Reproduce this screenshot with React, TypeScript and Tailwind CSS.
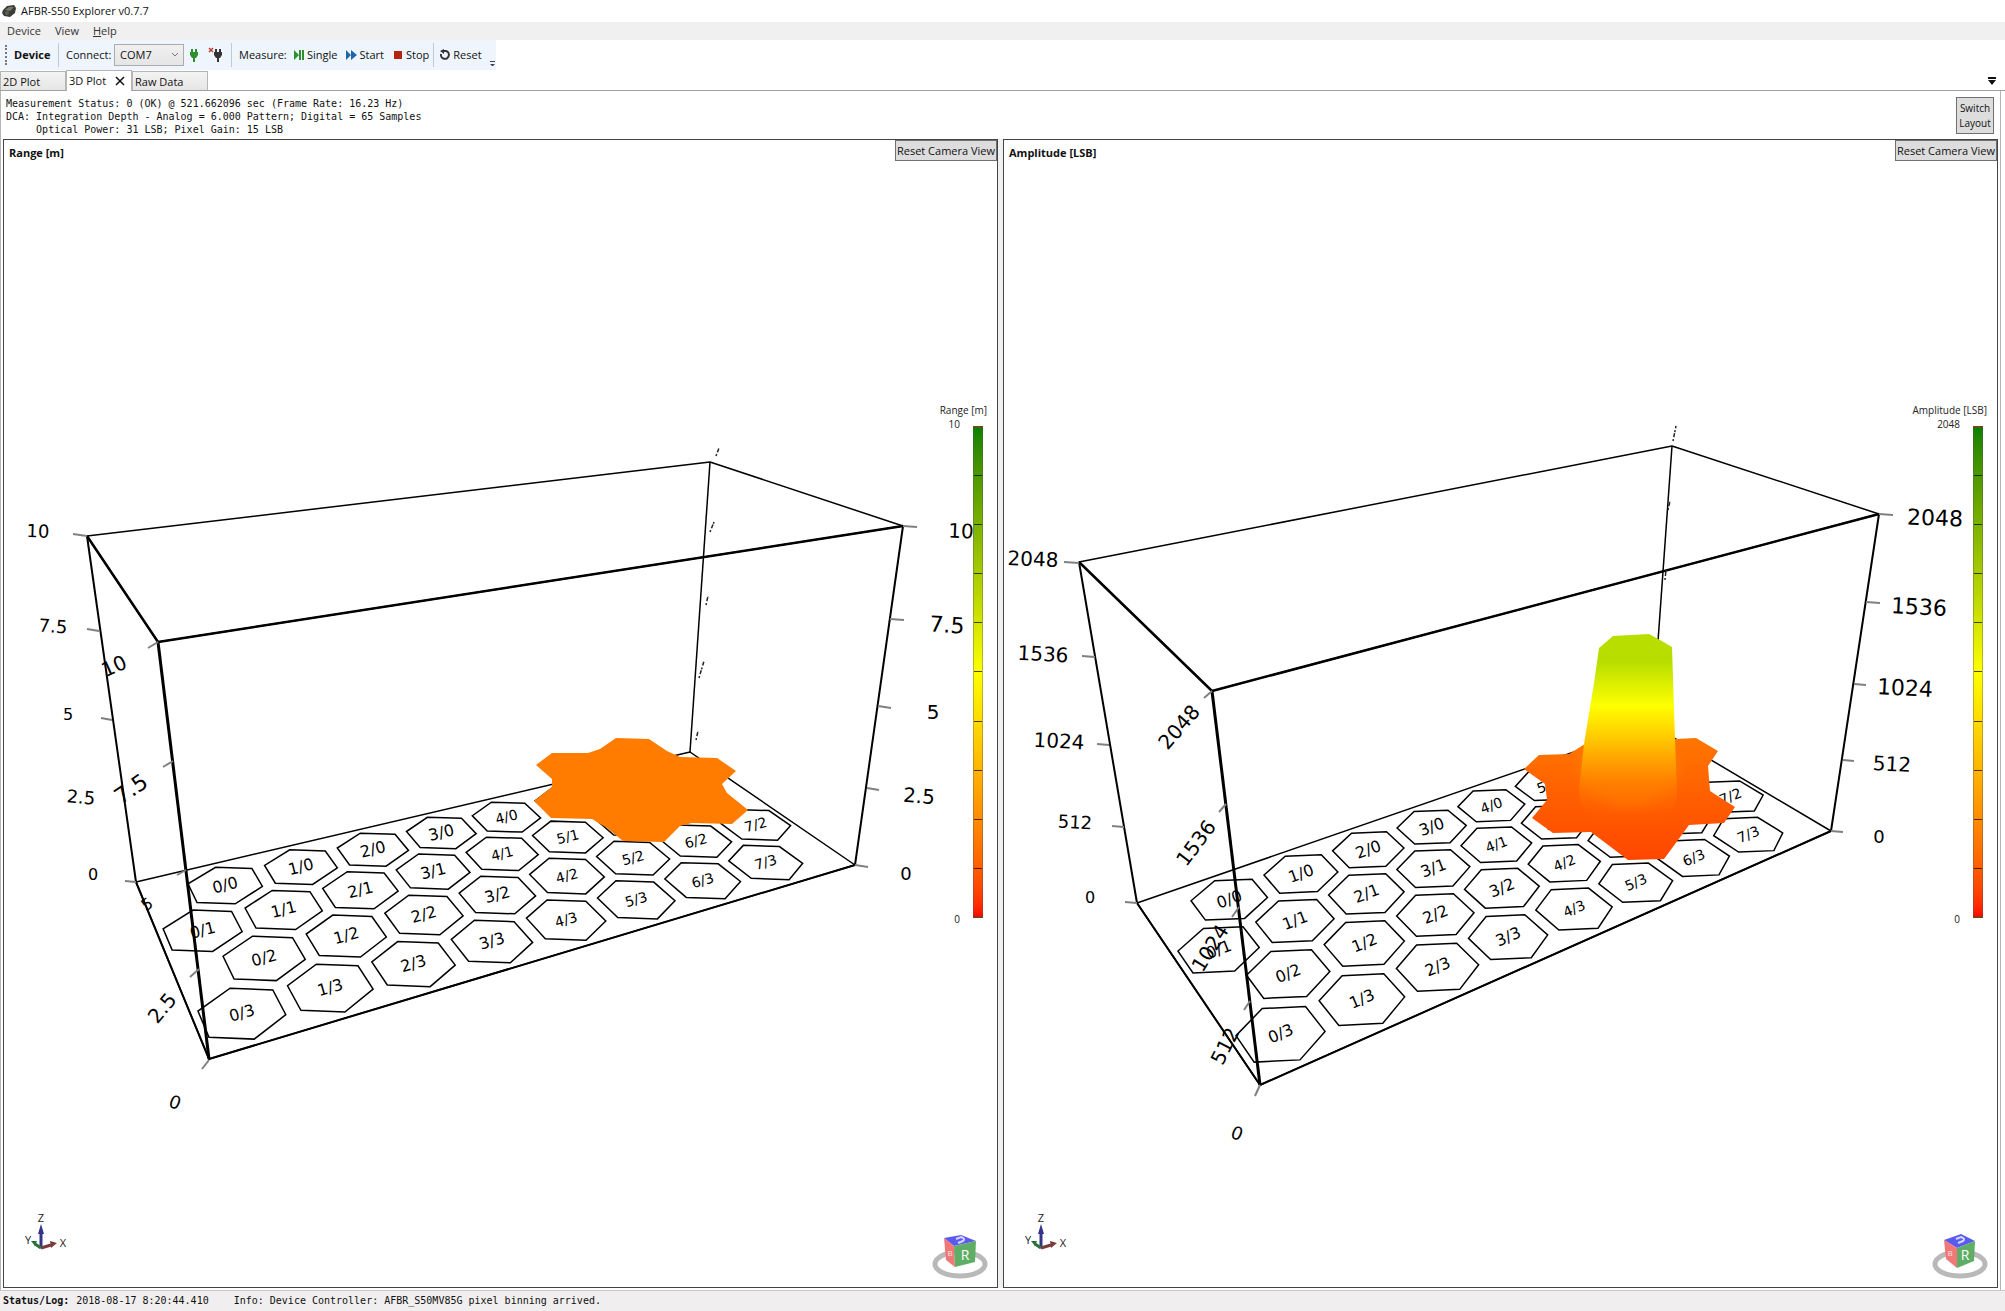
import { clsx } from "clsx";
import type { ReactNode } from "react";

type Point = [number, number];
type Segment = [Point, Point];

interface Label {
  text: string;
  at: Point;
  size: 14 | 16 | 18 | 20 | 22;
  angle?: number;
}

interface Scene {
  id: string;
  viewBox: string;
  // corner order: back left, back right, front right, front left
  floor: Point[];
  top: Point[];
  ticks: Segment[];
  specks: Segment[];
  labels: Label[];
}

const rangeScene: Scene = {
  id: "range",
  viewBox: "4 140 993 1147",
  floor: [[136, 882], [690, 752], [855, 865], [209, 1059]],
  top: [[87, 536], [710, 462], [903, 526], [158, 642]],
  ticks: [
    [[73, 534], [87, 536]],
    [[87, 629], [99, 631]],
    [[101, 718], [112, 720]],
    [[125, 881], [136, 882]],
    [[148, 648], [158, 642]],
    [[163, 767], [173, 761]],
    [[177, 875], [186, 870]],
    [[190, 977], [199, 969]],
    [[202, 1069], [209, 1060]],
    [[903, 526], [917, 527]],
    [[890, 619], [904, 620]],
    [[878, 706], [891, 708]],
    [[867, 788], [879, 790]],
    [[855, 865], [868, 867]],
  ],
  specks: [
    [[716, 456], [719, 448]],
    [[710, 532], [714, 522]],
    [[706, 605], [708, 596]],
    [[699, 678], [704, 661]],
    [[696, 740], [698, 731]],
  ],
  labels: [
    { text: "10", at: [38, 531], size: 18, angle: 2 },
    { text: "7.5", at: [53, 626], size: 18, angle: 4 },
    { text: "5", at: [68, 714], size: 16 },
    { text: "2.5", at: [81, 797], size: 18, angle: 5 },
    { text: "0", at: [93, 874], size: 16 },
    { text: "10", at: [114, 666], size: 20, angle: -24 },
    { text: "7.5", at: [131, 789], size: 22, angle: -34 },
    { text: "5", at: [147, 904], size: 16, angle: -35 },
    { text: "2.5", at: [162, 1008], size: 20, angle: -50 },
    { text: "0", at: [175, 1102], size: 18, angle: 20 },
    { text: "10", at: [961, 531], size: 20, angle: 2 },
    { text: "7.5", at: [947, 625], size: 22, angle: 4 },
    { text: "5", at: [933, 712], size: 20 },
    { text: "2.5", at: [919, 796], size: 20, angle: 4 },
    { text: "0", at: [906, 873], size: 18 },
  ],
};

const amplitudeScene: Scene = {
  id: "amplitude",
  viewBox: "1004 140 993 1147",
  floor: [[1137, 903], [1652, 725], [1831, 831], [1260, 1085]],
  top: [[1079, 562], [1672, 446], [1879, 514], [1212, 691]],
  ticks: [
    [[1064, 562], [1079, 563]],
    [[1082, 656], [1095, 657]],
    [[1097, 744], [1109, 745]],
    [[1112, 826], [1124, 827]],
    [[1125, 902], [1137, 903]],
    [[1204, 698], [1212, 691]],
    [[1219, 812], [1226, 804]],
    [[1232, 917], [1239, 907]],
    [[1244, 1010], [1250, 1001]],
    [[1255, 1096], [1260, 1085]],
    [[1879, 514], [1893, 515]],
    [[1866, 602], [1880, 603]],
    [[1854, 684], [1866, 685]],
    [[1843, 760], [1854, 761]],
    [[1831, 831], [1843, 832]],
  ],
  specks: [
    [[1673, 441], [1676, 426]],
    [[1668, 510], [1670, 501]],
    [[1665, 580], [1666, 570]],
  ],
  labels: [
    { text: "2048", at: [1033, 559], size: 20, angle: 2 },
    { text: "1536", at: [1043, 654], size: 20, angle: 3 },
    { text: "1024", at: [1059, 741], size: 20, angle: 3 },
    { text: "512", at: [1075, 822], size: 18, angle: 3 },
    { text: "0", at: [1090, 897], size: 16 },
    { text: "2048", at: [1179, 727], size: 20, angle: -49 },
    { text: "1536", at: [1196, 843], size: 20, angle: -53 },
    { text: "1024", at: [1210, 948], size: 20, angle: -58 },
    { text: "512", at: [1225, 1046], size: 20, angle: -63 },
    { text: "0", at: [1237, 1133], size: 18, angle: 20 },
    { text: "2048", at: [1935, 518], size: 22, angle: 2 },
    { text: "1536", at: [1919, 607], size: 22, angle: 3 },
    { text: "1024", at: [1905, 688], size: 22, angle: 3 },
    { text: "512", at: [1892, 764], size: 20, angle: 3 },
    { text: "0", at: [1879, 836], size: 18 },
  ],
};

const toPoints = (pts: Point[]) => pts.map((p) => p.join(",")).join(" ");

// Perspective map of the unit square onto the four floor corners.
function projector([p0, p1, p2, p3]: Point[]) {
  const sx = p0[0] - p1[0] + p2[0] - p3[0];
  const sy = p0[1] - p1[1] + p2[1] - p3[1];
  const dx1 = p1[0] - p2[0];
  const dx2 = p3[0] - p2[0];
  const dy1 = p1[1] - p2[1];
  const dy2 = p3[1] - p2[1];
  const det = dx1 * dy2 - dx2 * dy1;
  const g = (sx * dy2 - dx2 * sy) / det;
  const h = (dx1 * sy - sx * dy1) / det;
  return (u: number, v: number): Point => {
    const w = 1 + g * u + h * v;
    return [
      ((p1[0] - p0[0] + g * p1[0]) * u + (p3[0] - p0[0] + h * p3[0]) * v + p0[0]) / w,
      ((p1[1] - p0[1] + g * p1[1]) * u + (p3[1] - p0[1] + h * p3[1]) * v + p0[1]) / w,
    ];
  };
}

const COLS = 8;
const ROWS = 4;
const ROW_PITCH = Math.sqrt(3) / 2;
const CELL_RADIUS = 1 / Math.sqrt(3);
const HEX_RADIUS = 0.48;

function pixelGrid(floor: Point[]) {
  const project = projector(floor);
  const depth = (ROWS - 1) * ROW_PITCH + 2 * CELL_RADIUS;
  const map = (x: number, y: number) =>
    project((x + 0.5) / (COLS + 0.5), (y + CELL_RADIUS) / depth);

  return Array.from({ length: COLS * ROWS }, (_, i) => {
    const col = i % COLS;
    const row = Math.floor(i / COLS);
    const x = col + (row % 2 === 0 ? 0.5 : 0);
    const y = row * ROW_PITCH;
    const corners = Array.from({ length: 6 }, (_, k) => {
      const a = Math.PI / 6 + (k * Math.PI) / 3;
      return map(x + HEX_RADIUS * Math.cos(a), y + HEX_RADIUS * Math.sin(a));
    });
    const left = map(x - 0.3, y);
    const right = map(x + 0.3, y);
    const angle =
      (Math.atan2(right[1] - left[1], right[0] - left[0]) * 180) / Math.PI;
    return { name: `${col}/${row}`, col, center: map(x, y), corners, angle };
  });
}

function SceneText({ text, at, size, angle = 0 }: Label) {
  return (
    <text
      x={at[0]}
      y={at[1]}
      fontSize={size}
      textAnchor="middle"
      dominantBaseline="central"
      transform={`rotate(${Math.round(angle)} ${at[0]} ${at[1]})`}
    >
      {text}
    </text>
  );
}

function RangeSurface() {
  return (
    <polygon
      fill="#ff7c00"
      points="536,765 552,753 588,753 600,749 616,738 649,739 667,751 680,757 717,758 736,771 722,784 727,793 748,810 732,824 692,823 680,826 664,842 623,841 607,828 592,819 551,818 534,801 552,787 552,779"
    />
  );
}

function AmplitudeSurface() {
  return (
    <>
      <defs>
        <linearGradient id="base" x1="0" y1="738" x2="0" y2="860" gradientUnits="userSpaceOnUse">
          <stop offset="0" stopColor="#ff7600" />
          <stop offset="0.5" stopColor="#ff5e00" />
          <stop offset="1" stopColor="#ff4600" />
        </linearGradient>
        <linearGradient id="peak" x1="0" y1="634" x2="0" y2="834" gradientUnits="userSpaceOnUse">
          <stop offset="0" stopColor="#b8de00" />
          <stop offset="0.14" stopColor="#b8de00" />
          <stop offset="0.36" stopColor="#ffff00" />
          <stop offset="0.5" stopColor="#ffd000" />
          <stop offset="0.65" stopColor="#ff9c00" />
          <stop offset="0.76" stopColor="#ff7c00" stopOpacity="0.8" />
          <stop offset="0.95" stopColor="#ff5800" stopOpacity="0" />
        </linearGradient>
        <clipPath id="baseClip">
          <use href="#baseShape" />
        </clipPath>
        <filter id="soften">
          <feGaussianBlur stdDeviation="7" />
        </filter>
      </defs>
      <polygon
        id="baseShape"
        fill="url(#base)"
        points="1524,769 1539,755 1569,754 1585,744 1675,739 1696,738 1718,751 1708,766 1710,791 1735,807 1724,823 1689,825 1681,836 1664,859 1628,860 1591,832 1553,833 1532,818 1547,800 1545,784"
      />
      <g clipPath="url(#baseClip)">
        <ellipse cx="1629" cy="765" rx="48" ry="40" fill="#ff7c00" filter="url(#soften)" />
      </g>
      <path
        fill="url(#peak)"
        d="M1599 648 L1613 636 L1649 634 L1660 640 L1672 647 L1675 739 L1677 796 Q1672 834 1630 834 Q1582 834 1579 790 L1584 744 L1594 683 Z"
      />
    </>
  );
}

function Plot({ scene, children }: { scene: Scene; children: ReactNode }) {
  const { floor, top } = scene;
  return (
    <svg
      viewBox={scene.viewBox}
      className="absolute inset-0 h-full w-full font-['DejaVu_Sans',Verdana,sans-serif]"
      role="img"
      aria-label={`3D ${scene.id} plot`}
    >
      <g stroke="#000" strokeWidth="2" fill="none" strokeLinejoin="round">
        {[floor, top].map((ring, i) => (
          <polygon key={i} points={toPoints(ring)} strokeWidth="1.5" />
        ))}
        {floor.map((p, i) => (
          <line
            key={i}
            x1={p[0]}
            y1={p[1]}
            x2={top[i][0]}
            y2={top[i][1]}
            strokeWidth={i === 1 ? 1.5 : i === 3 ? 3 : 2}
          />
        ))}
        <polyline points={toPoints([top[0], top[3], top[2]])} strokeWidth="2.5" />
        <polyline points={toPoints([floor[0], floor[3], floor[2]])} />
      </g>
      <g stroke="#808080" strokeWidth="2">
        {scene.ticks.map(([a, b], i) => (
          <line key={i} x1={a[0]} y1={a[1]} x2={b[0]} y2={b[1]} />
        ))}
      </g>
      <g stroke="#222" strokeWidth="1.5" strokeDasharray="2 2 4 1">
        {scene.specks.map(([a, b], i) => (
          <line key={i} x1={a[0]} y1={a[1]} x2={b[0]} y2={b[1]} />
        ))}
      </g>
      {pixelGrid(floor).map((px) => (
        <g key={px.name}>
          <polygon
            points={toPoints(px.corners)}
            fill="none"
            stroke="#000"
            strokeWidth="1.5"
          />
          <SceneText
            text={px.name}
            at={px.center}
            size={px.col < 4 ? 16 : 14}
            angle={px.angle}
          />
        </g>
      ))}
      {children}
      {scene.labels.map((label, i) => (
        <SceneText key={i} {...label} />
      ))}
    </svg>
  );
}

function Legend({ title, max }: { title: string; max: string }) {
  return (
    <div className="absolute top-[263px] right-[10px] flex flex-col items-end text-[10px] leading-[14px] text-[#222]">
      <div>{title}</div>
      <div className="mr-[4px] flex h-[501px] gap-[13px]">
        <div className="flex flex-col items-end justify-between">
          <span>{max}</span>
          <span className="-mb-2">0</span>
        </div>
        <div className="mt-[9px] flex w-[10px] flex-col border border-[#555]/40 bg-linear-to-b from-[#008000] via-[#ffff00] to-[#ff0000]">
          {Array.from({ length: 10 }, (_, i) => (
            <div key={i} className={clsx("flex-1", i < 9 && "border-b border-black/70")} />
          ))}
        </div>
      </div>
    </div>
  );
}

function AxisTriad() {
  return (
    <svg
      viewBox="0 -8 48 50"
      className="absolute bottom-[32px] left-[20px] h-[50px] w-[48px] font-['Open_Sans',sans-serif]"
      aria-hidden="true"
    >
      <path d="M17 35 L17 20" stroke="#33338c" strokeWidth="3" />
      <path d="M17 11 L20 21 L14 21 Z" fill="#33338c" />
      <path d="M17 35 L27 32" stroke="#7a3a3a" strokeWidth="3" />
      <path d="M33 30 L26 28 L27 35 Z" fill="#7a3a3a" />
      <path d="M17 35 L11 31" stroke="#2c6e38" strokeWidth="3" />
      <path d="M7 28 L13 28 L11 33 Z" fill="#2c6e38" />
      <g fontSize="11" fill="#222" textAnchor="middle">
        <text x="17" y="9">Z</text>
        <text x="39" y="34">X</text>
        <text x="4" y="31">Y</text>
      </g>
    </svg>
  );
}

function ViewCube({ turned }: { turned?: boolean }) {
  return (
    <svg
      viewBox="0 0 60 48"
      className="absolute right-[7px] bottom-[7px] h-[48px] w-[60px] font-['Open_Sans',sans-serif]"
      aria-hidden="true"
    >
      <ellipse cx="30" cy="32" rx="25" ry="12" fill="none" stroke="#b9b9b9" strokeWidth="5" />
      {turned ? (
        <>
          <path d="M14 8 L31 2 L45 9 L27 16 Z" fill="#5a5af0" />
          <path d="M14 8 L27 16 L27 36 L16 27 Z" fill="#f07878" />
          <path d="M27 16 L45 9 L44 29 L27 36 Z" fill="#5fae66" />
        </>
      ) : (
        <>
          <path d="M14 6 L31 3 L46 9 L24 14 Z" fill="#5a5af0" />
          <path d="M14 6 L24 14 L25 35 L16 28 Z" fill="#f07878" />
          <path d="M24 14 L46 9 L45 30 L25 35 Z" fill="#5fae66" />
        </>
      )}
      <path d="M26 7 L31 5 Q36 7 33 9 L28 11" fill="none" stroke="#d4d4ff" strokeWidth="2" />
      <g fill="#fff" textAnchor="middle">
        <text x="35" y="28" fontSize="14">R</text>
        <text x="20" y="24" fontSize="8" fillOpacity="0.8">B</text>
      </g>
    </svg>
  );
}

function PlotPanel({
  title,
  max,
  scene,
  turned,
  children,
}: {
  title: string;
  max: string;
  scene: Scene;
  turned?: boolean;
  children: ReactNode;
}) {
  return (
    <section className="relative min-h-0 overflow-hidden border border-[#444] bg-white">
      <Plot scene={scene}>{children}</Plot>
      <h2 className="absolute top-[5px] left-[5px] text-[11px] leading-[16px] font-bold">
        {title}
      </h2>
      <button
        type="button"
        className="absolute top-0 right-0 h-[21px] border border-[#707070] bg-[#dddddd] px-px text-[11px] leading-[18px]"
      >
        Reset Camera View
      </button>
      <Legend title={title} max={max} />
      <AxisTriad />
      <ViewCube turned={turned} />
    </section>
  );
}

function Plug({ color, off }: { color: string; off?: boolean }) {
  return (
    <svg viewBox="0 0 16 16" className="h-4 w-4" aria-hidden="true">
      <path d="M8 2 V6 M12 2 V6 M10 10 V15" stroke={color} strokeWidth="2" />
      <path d="M6 5 H14 V8 L12 11 H8 L6 8 Z" fill={color} />
      {off ? (
        <path d="M1 1 L5 5 M5 1 L1 5" stroke="#c23b2e" strokeWidth="1.5" />
      ) : null}
    </svg>
  );
}

function ToolButton({ label, children }: { label: string; children: ReactNode }) {
  return (
    <button type="button" className="flex items-center gap-[2px]">
      <svg viewBox="0 0 12 12" className="h-3 w-3" aria-hidden="true">
        {children}
      </svg>
      {label}
    </button>
  );
}

const Separator = () => <span className="h-6 w-px bg-[#c3c9d1]" />;

function Toolbar() {
  return (
    <div
      role="toolbar"
      className="flex h-[30px] w-[496px] items-center bg-[#eef5fd] pl-[5px] text-[11px]"
    >
      <span className="mr-[7px] h-5 border-l-2 border-dotted border-[#777]" />
      <strong className="w-[36px]">Device</strong>
      <span className="ml-[8px]" />
      <Separator />
      <label htmlFor="port" className="ml-[7px] w-[48px]">
        Connect:
      </label>
      <div className="relative">
        <select
          id="port"
          className="h-[22px] w-[70px] appearance-none border border-[#acacac] bg-linear-to-b from-[#f0f0f0] to-[#e5e5e5] pl-[5px] text-[11px]"
        >
          <option>COM7</option>
        </select>
        <svg
          viewBox="0 0 8 6"
          className="pointer-events-none absolute top-[8px] right-[5px] h-[6px] w-[8px]"
          aria-hidden="true"
        >
          <path d="M1 1 L4 4 L7 1" fill="none" stroke="#777" />
        </svg>
      </div>
      <button type="button" aria-label="Connect">
        <Plug color="#2f8f2f" />
      </button>
      <button type="button" aria-label="Disconnect" className="ml-[8px]">
        <Plug color="#333" off />
      </button>
      <span className="ml-[7px]" />
      <Separator />
      <span className="ml-[7px] w-[54px]">Measure:</span>
      <div className="flex gap-[8px]">
        <ToolButton label="Single">
          <path d="M1 1 L6 6 L1 11 Z M6 1 H8 V11 H6 Z M9 1 H11 V11 H9 Z" fill="#2f8f2f" />
        </ToolButton>
        <ToolButton label="Start">
          <path d="M1 1 L6 6 L1 11 Z M6 1 L12 6 L6 11 Z" fill="#1f66a8" />
        </ToolButton>
        <ToolButton label="Stop">
          <path d="M2 2 H10 V10 H2 Z" fill="#b32412" />
        </ToolButton>
      </div>
      <span className="ml-[4px]" />
      <Separator />
      <span className="ml-[5px]" />
      <ToolButton label="Reset">
        <path d="M4 2 H7 A4 4 0 1 1 2 5" fill="none" stroke="#333" strokeWidth="2" />
        <path d="M5 0 V5 L1 2 Z" fill="#333" />
      </ToolButton>
      <svg viewBox="0 0 6 6" className="mt-[18px] ml-auto h-[6px] w-[6px]" aria-hidden="true">
        <path d="M0 0 H5 V1 H0 Z M0 3 H5 L3 5 H2 Z" fill="#444" />
      </svg>
    </div>
  );
}

function Tabs() {
  return (
    <div className="flex h-[21px] items-end border-b border-[#a0a0a0] pr-[4px] text-[11px]" role="tablist">
      <button
        type="button"
        role="tab"
        className="h-[19px] w-[66px] border border-b-0 border-[#b5b5b5] bg-linear-to-b from-[#f3f3f3] to-[#e6e6e6] pl-[2px] text-left leading-[17px]"
      >
        2D Plot
      </button>
      <div className="-mb-px flex h-[21px] w-[66px] items-center justify-between border-x border-t border-[#b5b5b5] bg-white pr-[6px] pl-[2px]">
        <button type="button" role="tab" aria-selected="true">
          3D Plot
        </button>
        <button type="button" aria-label="Close tab">
          <svg viewBox="0 0 10 10" className="h-[10px] w-[10px]" aria-hidden="true">
            <path d="M1 1 L9 9 M9 1 L1 9" stroke="#111" strokeWidth="1.5" />
          </svg>
        </button>
      </div>
      <button
        type="button"
        role="tab"
        className="h-[19px] w-[76px] border border-b-0 border-[#b5b5b5] bg-linear-to-b from-[#f3f3f3] to-[#e6e6e6] pl-[2px] text-left leading-[17px]"
      >
        Raw Data
      </button>
      <button type="button" aria-label="Tab list" className="mr-[5px] mb-[5px] ml-auto">
        <svg viewBox="0 0 8 8" className="h-2 w-2" aria-hidden="true">
          <path d="M0 0 H8 V2 H0 Z M0 3 H8 L4 8 Z" fill="#111" />
        </svg>
      </button>
    </div>
  );
}

export default function App() {
  return (
    <div className="flex h-screen flex-col overflow-hidden bg-white font-['Open_Sans','Noto_Sans',sans-serif] text-[#111]">
      <header className="flex h-[22px] shrink-0 items-center gap-[5px] pl-[2px] text-[11px]">
        <svg viewBox="0 0 14 14" className="h-[14px] w-[14px]" aria-hidden="true">
          <path d="M1 6 L5 2 L12 1 L14 4 L13 9 L8 13 L2 12 L0 9 Z" fill="#3a3d36" />
          <path d="M3 6 L7 3 L12 3 L8 7 Z" fill="#77796d" />
          <circle cx="5" cy="9" r="2" fill="#5c5f55" />
        </svg>
        <h1>AFBR-S50 Explorer v0.7.7</h1>
      </header>
      <nav className="flex h-[18px] shrink-0 items-center gap-[14px] bg-[#f0f0f0] pl-[7px] text-[11px] text-[#333]">
        <button type="button">Device</button>
        <button type="button">View</button>
        <button type="button">
          <u>H</u>elp
        </button>
      </nav>
      <Toolbar />
      <Tabs />
      <main className="mr-[4px] flex min-h-0 flex-1 flex-col border-x border-[#b5b5b5] pr-[2px] pb-[2px] pl-[2px]">
        <div className="flex h-[48px] shrink-0 items-start justify-between pr-[4px]">
          <pre className="mt-[6px] ml-[3px] font-['DejaVu_Sans_Mono',monospace] text-[10px] leading-[13px]">
            {`Measurement Status: 0 (OK) @ 521.662096 sec (Frame Rate: 16.23 Hz)
DCA: Integration Depth - Analog = 6.000 Pattern; Digital = 65 Samples
     Optical Power: 31 LSB; Pixel Gain: 15 LSB`}
          </pre>
          <button
            type="button"
            className="mt-[6px] h-[37px] w-[38px] border border-[#707070] bg-[#dddddd] pt-px text-center text-[10px] leading-[15px]"
          >
            Switch
            <br />
            Layout
          </button>
        </div>
        <div className="grid min-h-0 flex-1 grid-cols-2 gap-[5px] bg-[#f0f0f0]">
          <PlotPanel title="Range [m]" max="10" scene={rangeScene}>
            <RangeSurface />
          </PlotPanel>
          <PlotPanel title="Amplitude [LSB]" max="2048" scene={amplitudeScene} turned>
            <AmplitudeSurface />
          </PlotPanel>
        </div>
      </main>
      <footer className="flex h-[21px] shrink-0 items-center border-t border-[#c8c8c8] bg-[#f0eeee] pb-[2px] pl-[3px] font-['DejaVu_Sans_Mono',monospace] text-[10px]">
        <strong>Status/Log:</strong>
        <span className="ml-[7px]">2018-08-17 8:20:44.410</span>
        <span className="ml-[25px]">
          Info: Device Controller: AFBR_S50MV85G pixel binning arrived.
        </span>
      </footer>
    </div>
  );
}
